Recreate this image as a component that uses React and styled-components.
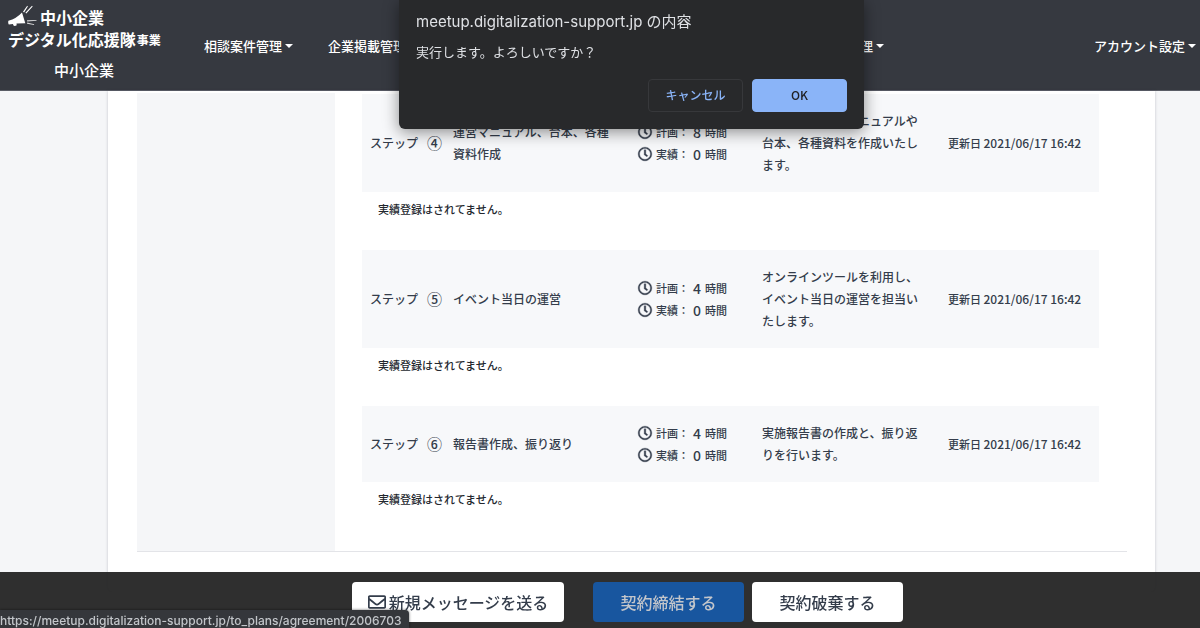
import React from 'react';
import styled, { createGlobalStyle } from 'styled-components';
import { FaRegClock, FaRegEnvelope } from 'react-icons/fa';

const colors = {
  navy: '#363940',
  text: '#343d4b',
  page: '#f5f6f8',
  row: '#f7f8fa',
  line: '#e3e4e8',
  blue: '#18569f',
};

const GlobalStyle = createGlobalStyle`
  * {
    box-sizing: border-box;
  }

  body {
    margin: 0;
    background-color: ${colors.page};
    color: ${colors.text};
    font-family: 'Noto Sans CJK JP', sans-serif;
    font-size: 12px;
    font-weight: 500;
    line-height: 22px;
    overflow: hidden;
  }

  p, h2 {
    margin: 0;
    font-size: inherit;
    font-weight: inherit;
  }

  button {
    font-family: inherit;
    cursor: pointer;
  }
`;

const Header = styled.header`
  display: flex;
  align-items: flex-start;
  height: 91px;
  padding: 6px 4px 0 8px;
  border-bottom: 1px solid #5a5d66;
  background-color: ${colors.navy};
  color: #fff;
`;

const Brand = styled.a`
  width: 196px;
  color: inherit;
  text-decoration: none;
`;

const LogoLine = styled.span`
  display: flex;
  align-items: center;
  height: 22px;
  font-size: 16px;
  font-weight: 700;
  white-space: nowrap;

  svg {
    width: 32px;
    height: 24px;
  }

  small {
    margin-left: 1px;
    padding-top: 2px;
    font-size: 12px;
  }
`;

const BrandRole = styled.span`
  display: block;
  width: 152px;
  margin-top: 9px;
  font-size: 15px;
  text-align: center;
`;

const Nav = styled.nav`
  display: flex;
  flex: 1;
  justify-content: space-between;
  padding-top: 29px;
`;

const NavGroup = styled.div`
  display: flex;
  flex: 0 1 680px;
  gap: 35px;
`;

const NavLink = styled.a`
  display: flex;
  align-items: center;
  gap: 3px;
  margin-left: ${({ $end }) => ($end ? 'auto' : '0')};
  color: inherit;
  font-size: 13px;
  text-decoration: none;
  white-space: nowrap;

  &::after {
    content: '';
    border-top: 4px solid;
    border-right: 4px solid transparent;
    border-left: 4px solid transparent;
  }
`;

const Page = styled.main`
  padding: 0 45px 0 108px;
`;

const Card = styled.div`
  padding: 2px 28px 40px 29px;
  border-radius: 0 0 6px 6px;
  background-color: #fff;
  box-shadow: 0 0 3px rgba(40, 45, 60, 0.25);
`;

const Plan = styled.div`
  display: grid;
  grid-template-columns: 1fr 4fr;
  border-bottom: 1px solid ${colors.line};
`;

const PlanSide = styled.div`
  background-color: ${colors.page};
`;

const StepList = styled.div`
  padding: 1px 28px 11px 27px;
`;

const StepRow = styled.div`
  display: grid;
  grid-template-columns: 57px 26px minmax(0, 185fr) 124px minmax(0, 186fr) 143px;
  align-items: center;
  padding: 16px 8px;
  background-color: ${colors.row};
`;

const StepNumber = styled.span`
  font-size: 15px;
`;

const StepText = styled.p`
  padding-right: 24px;
`;

const StepTime = styled.p`
  display: flex;
  align-items: center;
  font-size: 11px;
  white-space: pre;

  svg {
    width: 14px;
    height: 14px;
    margin-right: 4px;
    overflow: visible;
    stroke-width: 14px;
  }

  b {
    margin: 0 4px;
    font-size: 14px;
    font-weight: 500;
  }
`;

const StepDate = styled.p`
  font-size: 11px;
  white-space: nowrap;

  time {
    font-size: 12px;
  }
`;

const StepNote = styled.p`
  margin-bottom: 24px;
  padding: 6px 16px;
  color: #23272e;
  font-size: 11px;
`;

const ActionBar = styled.footer`
  position: fixed;
  right: 0;
  bottom: 0;
  left: 0;
  display: flex;
  justify-content: center;
  gap: 8px;
  height: 56px;
  padding: 10px 0 0 55px;
  background-color: rgba(34, 34, 34, 0.94);
`;

const ActionButton = styled.button`
  display: flex;
  align-items: center;
  justify-content: center;
  gap: 3px;
  width: ${({ $wide }) => ($wide ? '212px' : '151px')};
  height: 40px;
  margin-right: ${({ $wide }) => ($wide ? '21px' : '0')};
  padding: 0;
  border: 0;
  border-radius: 4px;
  background-color: ${({ $primary }) => ($primary ? colors.blue : '#fff')};
  color: ${({ $primary }) => ($primary ? '#c3c6cb' : colors.text)};
  font-size: 16px;
  font-weight: 500;

  svg {
    width: 18px;
    height: 18px;
  }
`;

const StatusUrl = styled.div`
  position: fixed;
  bottom: 0;
  left: 0;
  height: 18px;
  padding-right: 8px;
  border-radius: 0 4px 0 0;
  background-color: #35373b;
  box-shadow: 0 0 3px rgba(0, 0, 0, 0.6);
  color: #c2c5c9;
  font-family: Inter, sans-serif;
  font-size: 12px;
  font-weight: 500;
`;

const Dialog = styled.div`
  position: fixed;
  top: 0;
  left: 399px;
  width: 465px;
  height: 129px;
  padding: 11px 17px 17px;
  border-radius: 0 0 6px 6px;
  background-color: #28292b;
  box-shadow: 0 3px 16px rgba(0, 0, 0, 0.45);
  color: #dfe1e5;
  font-weight: 400;
`;

const DialogTitle = styled.h2`
  font-family: Inter, 'Noto Sans CJK JP', sans-serif;
  font-size: 15px;
`;

const DialogMessage = styled.p`
  margin-top: 8px;
  font-size: 13px;
`;

const DialogActions = styled.div`
  display: flex;
  justify-content: flex-end;
  gap: 9px;
  margin-top: 16px;
`;

const DialogButton = styled.button`
  width: 95px;
  height: 33px;
  padding: 0 0 2px;
  border: 1px solid ${({ $primary }) => ($primary ? '#8ab4f8' : '#37383b')};
  border-radius: 4px;
  background-color: ${({ $primary }) => ($primary ? '#8ab4f8' : 'transparent')};
  color: ${({ $primary }) => ($primary ? '#202124' : '#8ab4f8')};
  font-size: 12px;
  font-weight: 500;
`;

const steps = [
  {
    number: '④',
    title: '運営マニュアル、台本、各種資料作成',
    planned: 8,
    text: '当日に使う運営マニュアルや台本、各種資料を作成いたします。',
  },
  {
    number: '⑤',
    title: 'イベント当日の運営',
    planned: 4,
    text: 'オンラインツールを利用し、イベント当日の運営を担当いたします。',
  },
  {
    number: '⑥',
    title: '報告書作成、振り返り',
    planned: 4,
    text: '実施報告書の作成と、振り返りを行います。',
  },
];

const Megaphone = () => (
  <svg viewBox="0 0 32 24" fill="#fff" aria-hidden="true">
    <path d="M14 7.5 L17.3 18.2 L8.5 18.5 L8.7 20.3 Q6.5 21.8 5.3 20.3 L5 19 L0.8 19.5 Q-0.2 17.8 0.4 15.8 Q8.5 13.6 14 7.5Z" />
    <path d="M15 6.8 L19.2 0.8 L19.9 1.4 L16.1 7.6Z M17.4 7.8 L24 0.7 L24.7 1.4 L18.3 8.6Z" />
    <path opacity="0.8" d="M19 15.2 L28.5 15 L28.5 15.8 L19.1 16.4Z M19.2 17.6 L26.2 19.2 L26 20 L19 18.7Z" />
  </svg>
);

const Step = ({ step }) => (
  <section>
    <StepRow>
      <span>ステップ</span>
      <StepNumber>{step.number}</StepNumber>
      <StepText>{step.title}</StepText>
      <div>
        <StepTime>
          <FaRegClock />計画：<b>{step.planned}</b>時間
        </StepTime>
        <StepTime>
          <FaRegClock />実績：<b>0</b>時間
        </StepTime>
      </div>
      <StepText>{step.text}</StepText>
      <StepDate>
        更新日 <time dateTime="2021-06-17T16:42">2021/06/17 16:42</time>
      </StepDate>
    </StepRow>
    <StepNote>実績登録はされてません。</StepNote>
  </section>
);

const App = () => {
  return (
    <>
      <GlobalStyle />
      <Header>
        <Brand href="#">
          <LogoLine>
            <Megaphone />
            中小企業
          </LogoLine>
          <LogoLine>
            デジタル化応援隊<small>事業</small>
          </LogoLine>
          <BrandRole>中小企業</BrandRole>
        </Brand>
        <Nav>
          <NavGroup>
            <NavLink href="#">相談案件管理</NavLink>
            <NavLink href="#">企業掲載管理</NavLink>
            <NavLink href="#" $end>契約管理</NavLink>
          </NavGroup>
          <NavLink href="#">アカウント設定</NavLink>
        </Nav>
      </Header>

      <Page>
        <Card>
          <Plan>
            <PlanSide />
            <StepList>
              {steps.map((step) => (
                <Step key={step.number} step={step} />
              ))}
            </StepList>
          </Plan>
        </Card>
      </Page>

      <ActionBar>
        <ActionButton $wide type="button">
          <FaRegEnvelope />
          新規メッセージを送る
        </ActionButton>
        <ActionButton $primary type="button">契約締結する</ActionButton>
        <ActionButton type="button">契約破棄する</ActionButton>
      </ActionBar>

      <StatusUrl>https://meetup.digitalization-support.jp/to_plans/agreement/2006703</StatusUrl>

      <Dialog role="dialog" aria-labelledby="dialog-title">
        <DialogTitle id="dialog-title">meetup.digitalization-support.jp の内容</DialogTitle>
        <DialogMessage>実行します。よろしいですか？</DialogMessage>
        <DialogActions>
          <DialogButton type="button">キャンセル</DialogButton>
          <DialogButton $primary type="button">OK</DialogButton>
        </DialogActions>
      </Dialog>
    </>
  );
};

export default App;
